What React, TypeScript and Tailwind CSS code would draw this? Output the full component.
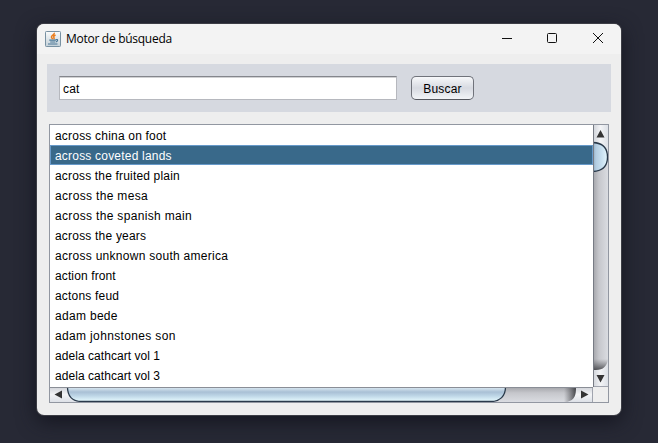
import React from "react";

const titles: { text: string; tracking: string }[] = [
  { text: "across china on foot", tracking: "tracking-[0.2px]" },
  { text: "across coveted lands", tracking: "tracking-[0.2px]" },
  { text: "across the fruited plain", tracking: "tracking-[0.170px]" },
  { text: "across the mesa", tracking: "tracking-[0.330px]" },
  { text: "across the spanish main", tracking: "tracking-[0.330px]" },
  { text: "across the years", tracking: "tracking-[0.2px]" },
  { text: "across unknown south america", tracking: "tracking-[0.280px]" },
  { text: "action front", tracking: "tracking-[0.120px]" },
  { text: "actons feud", tracking: "tracking-[0.2px]" },
  { text: "adam bede", tracking: "tracking-[0.310px]" },
  { text: "adam johnstones son", tracking: "tracking-[0.350px]" },
  { text: "adela cathcart vol 1", tracking: "tracking-[0.050px]" },
  { text: "adela cathcart vol 3", tracking: "tracking-[0.050px]" },
];

function JavaIcon() {
  return (
    <svg width="16" height="16" viewBox="0 0 16 16" className="shrink-0">
      <defs>
        <linearGradient id="javaBg" x1="0" y1="0" x2="0" y2="1">
          <stop offset="0" stopColor="#fafbfb" />
          <stop offset="1" stopColor="#c3d0d8" />
        </linearGradient>
      </defs>
      <rect x="0.5" y="0.5" width="15" height="15" rx="0.8" fill="url(#javaBg)" stroke="#7891a2" />
      <path d="M9.300 1.800c.5 2-3.500 2.600-2.800 4.500.2.700 1 1.200 1 1.900M10.500 4C8.700 5 8.200 5.800 9 6.700c.4.600.2 1-.3 1.500" fill="none" stroke="#ea7d1c" strokeWidth="1.500" />
      <path d="M4.300 9.200h6.500M5.200 11h5.200M10.800 8.600c2.500-.5 2.300 1.700.2 2.300M3 13h9.500" fill="none" stroke="#4a7796" strokeWidth="1.200" />
    </svg>
  );
}

function TitleBar() {
  return (
    <div className="flex h-[30px] shrink-0 items-center rounded-t-[7px] bg-[#f3f3f3] pl-2">
      <JavaIcon />
      <span className="ml-[5px] font-['Open_Sans','Noto_Sans',sans-serif] text-[12px] leading-4 tracking-[-0.280px] whitespace-nowrap">
        Motor de búsqueda
      </span>
      <svg width="102" height="12" viewBox="0 0 102 12" className="relative -top-px mr-[17px] ml-auto" fill="none" stroke="#111">
        <path d="M0 6.500h10" />
        <rect x="45.500" y="1.500" width="9" height="9" rx="1" />
        <path d="M91 1l10 10M101 1l-10 10" />
      </svg>
    </div>
  );
}

function VerticalBar() {
  return (
    <svg width="15" height="262" viewBox="0 0 15 262" className="block shrink-0">
      <defs>
        <linearGradient id="vTrack">
          <stop offset="0" stopColor="#a3a4a9" />
          <stop offset="0.400" stopColor="#c6c7cc" />
          <stop offset="1" stopColor="#dadce1" />
        </linearGradient>
        <linearGradient id="vThumb">
          <stop offset="0" stopColor="#8faac0" />
          <stop offset="0.200" stopColor="#b3cce0" />
          <stop offset="0.600" stopColor="#c8e0f0" />
          <stop offset="1" stopColor="#e4f6fd" />
        </linearGradient>
        <linearGradient id="vButton">
          <stop offset="0" stopColor="#cfd2d8" />
          <stop offset="0.500" stopColor="#f3f4f6" />
          <stop offset="1" stopColor="#dde1e7" />
        </linearGradient>
        <linearGradient id="vEnd" x1="0" y1="0" x2="0" y2="1">
          <stop offset="0" stopColor="#55565b" stopOpacity="0" />
          <stop offset="1" stopColor="#37383c" stopOpacity="0.900" />
        </linearGradient>
      </defs>
      <rect width="15" height="262" fill="url(#vTrack)" />
      <rect y="234" width="15" height="12" fill="url(#vEnd)" />
      <path d="M0 0h15v28Q13 18 0 17z" fill="url(#vButton)" />
      <path d="M0 17.500C9 18 14.500 23 14.500 32S9 46 0 46.500z" fill="url(#vThumb)" />
      <path d="M0 17.500C9 18 14.500 23 14.500 32S9 46 0 46.500" fill="none" stroke="#29394a" strokeWidth="1.300" />
      <path d="M0 245C8 245 13 244 15 235v27H0z" fill="url(#vButton)" />
      <path d="M7.500 5l4 7.500h-8zM7.500 257.500l4-7.500h-8z" fill="#343434" />
      <path d="M0 261.500h15" stroke="#a0a4ae" />
      <path d="M0.500 0v262" stroke="#777b84" />
    </svg>
  );
}

function HorizontalBar() {
  return (
    <svg width="543" height="15" viewBox="0 0 543 15" className="block shrink-0">
      <defs>
        <linearGradient id="hTrack" x1="0" y1="0" x2="0" y2="1">
          <stop offset="0" stopColor="#a3a4a9" />
          <stop offset="0.400" stopColor="#c6c7cc" />
          <stop offset="1" stopColor="#dadce1" />
        </linearGradient>
        <linearGradient id="hThumb" x1="0" y1="0" x2="0" y2="1">
          <stop offset="0" stopColor="#e0edf5" />
          <stop offset="0.350" stopColor="#a9c0d5" />
          <stop offset="0.600" stopColor="#bdd5e6" />
          <stop offset="1" stopColor="#e8fbff" />
        </linearGradient>
        <linearGradient id="hButton" x1="0" y1="0" x2="0" y2="1">
          <stop offset="0" stopColor="#cfd2d8" />
          <stop offset="0.500" stopColor="#f3f4f6" />
          <stop offset="1" stopColor="#dde1e7" />
        </linearGradient>
        <linearGradient id="hEnd">
          <stop offset="0" stopColor="#55565b" stopOpacity="0" />
          <stop offset="1" stopColor="#37383c" stopOpacity="0.900" />
        </linearGradient>
      </defs>
      <rect width="543" height="15" fill="url(#hTrack)" />
      <rect x="514" width="12" height="15" fill="url(#hEnd)" />
      <path d="M0 0h17q2 14 14 15H0z" fill="url(#hButton)" />
      <path d="M17.500 0C17.500 9 22 14.500 32 14.500H441C450 14.500 455.500 9 455.500 0z" fill="url(#hThumb)" stroke="#29394a" strokeWidth="1.300" />
      <path d="M526 0c0 8-1 13-9 15h26V0z" fill="url(#hButton)" />
      <path d="M4.500 7.500l7.500-4v8zM538.500 7.500l-7.500-4v8z" fill="#343434" />
      <path d="M542.500 0v15" stroke="#a0a4ae" />
      <path d="M0 0.500h543" stroke="#8a8e96" />
    </svg>
  );
}

export default function App() {
  return (
    <div className="h-[443px] w-[658px] overflow-hidden bg-[#272935] pt-6 pl-[37px] font-['Liberation_Sans',Arial,sans-serif] text-[12px] text-black">
      <div className="flex h-[391px] w-[584px] flex-col rounded-[7px] bg-[#eeeeee] shadow-[0_0_0_1px_#3c3d45,0_6px_20px_#14151f]">
        <TitleBar />
        <div className="mt-[10px] ml-[10px] flex h-12 w-[564px] shrink-0 items-start bg-[#d6d9e0] pt-3 pl-3">
          <div className="flex h-6 w-[338px] items-center border border-[#b6b8be] border-t-[#84868c] bg-white pt-0.5 pl-[3px] shadow-[inset_0_1px_0_#d0d1d3]">
            <span className="tracking-[0.2px]">cat</span>
          </div>
          <button className="ml-[14px] flex h-6 w-[63px] items-center justify-center rounded-[5px] border border-[#70737b] border-b-[#55585f] bg-linear-to-b from-[#f7f8fa] via-[#d7dae1] to-[#f2f4f7] pt-0.5">
            <span className="tracking-[0.2px]">Buscar</span>
          </button>
        </div>
        <div className="mt-3 ml-3 h-[279px] w-[560px] shrink-0 border border-[#9297a1]">
          <div className="flex">
            <ul className="h-[262px] w-[543px] bg-white">
              {titles.map((t, i) => (
                <li
                  key={t.text}
                  className={
                    i === 1
                      ? "flex h-5 items-center border border-[#6699c9] bg-[#39698a] pt-0.5 pl-1 text-white"
                      : "flex h-5 items-center pt-0.5 pl-[5px]"
                  }
                >
                  <span className={`whitespace-nowrap ${t.tracking}`}>{t.text}</span>
                </li>
              ))}
            </ul>
            <VerticalBar />
          </div>
          <div className="flex">
            <HorizontalBar />
            <div className="h-[15px] w-[15px] bg-[#eeeeee]" />
          </div>
        </div>
      </div>
    </div>
  );
}
